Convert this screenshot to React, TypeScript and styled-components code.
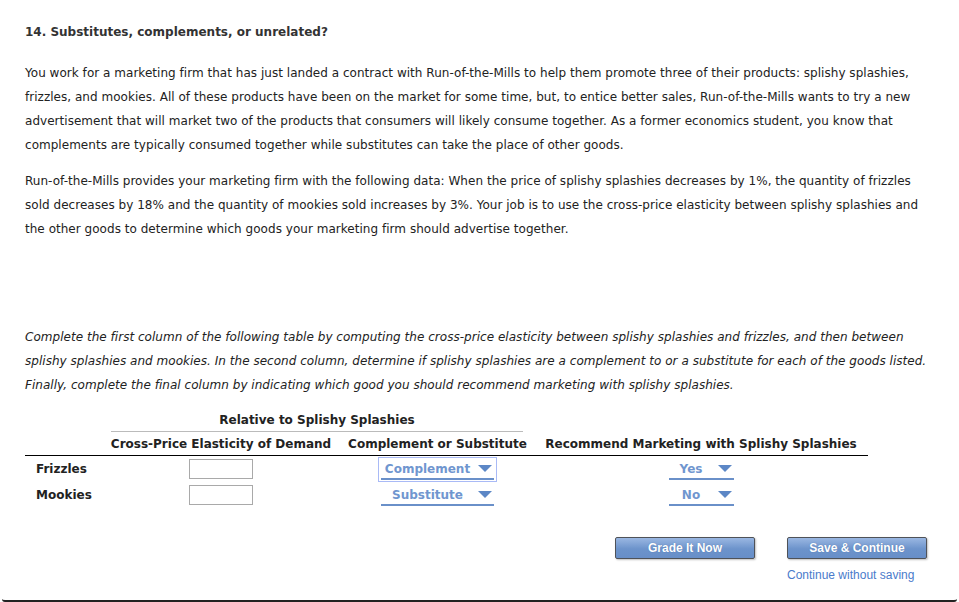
import React from 'react';
import styled, { createGlobalStyle } from 'styled-components';

const GlobalStyle = createGlobalStyle`
  body {
    margin: 0;
    background: #fff;
    font-family: "DejaVu Sans", Verdana, sans-serif;
  }
`

const Page = styled.div`
  box-sizing: border-box;
  width: 955px;
  height: 602px;
  margin: 0 2px;
  padding: 24px 30px 0 21px;
  border-bottom: 2px solid #222;
  border-radius: 0 0 3px 3px;
  color: #222;
  font-size: 12px;
`
const Title = styled.h2`
  margin: 0 0 21px 2px;
  font-size: 12px;
  line-height: 16px;
  font-weight: bold;
  color: #333;
`
const Para = styled.p<{ $italic?: boolean; $gap?: number }>`
  margin: 0 0 ${p => p.$gap ?? 12}px 2px;
  width: 912px;
  line-height: 24px;
  letter-spacing: 0.03px;
  font-style: ${p => (p.$italic ? 'italic' : 'normal')};
`
const Table = styled.table`
  margin: 15px 0 0 2px;
  width: 843px;
  border-collapse: collapse;
  table-layout: fixed;
`
const GroupCell = styled.th`
  padding: 0 11px 0 10px;
  font-weight: bold;
  font-size: 12px;
`
const GroupLabel = styled.div`
  line-height: 16px;
  padding-bottom: 3px;
  border-bottom: 1px solid #bbb;
`
const HeadCell = styled.th`
  padding: 4px 0 3px;
  line-height: 16px;
  font-size: 12px;
  font-weight: bold;
  text-align: center;
  border-bottom: 1px solid #000;
  white-space: nowrap;
`
const RowLabel = styled.td`
  height: 26px;
  padding: 0 0 0 11px;
  font-weight: bold;
  font-size: 12px;
  vertical-align: middle;
`
const Cell = styled.td`
  text-align: center;
  vertical-align: middle;
  padding: 0;
`
const TextBox = styled.input`
  box-sizing: border-box;
  width: 64px;
  height: 20px;
  border: 1px solid #a9a9a9;
  padding: 0 3px;
  font: inherit;
  vertical-align: middle;
`
const SelectWrap = styled.span<{ $focused?: boolean }>`
  display: inline-block;
  vertical-align: middle;
  padding: 2px 2px 1px;
  border: 1px solid ${p => (p.$focused ? '#a9baf6' : 'transparent')};
`
const Select = styled.span<{ $width: number }>`
  display: flex;
  align-items: center;
  width: ${p => p.$width}px;
  height: 18px;
  border-bottom: 2px solid #6a90c9;
  color: #7096cf;
  font-weight: bold;
  font-size: 12px;
  cursor: pointer;
`
const SelectText = styled.span`
  flex: 1;
  text-align: center;
`
const Arrow = styled.svg`
  width: 14px;
  height: 8px;
  margin: 0 2px 0 4px;
`
const Actions = styled.div`
  display: flex;
  justify-content: flex-end;
  gap: 32px;
  margin-top: 29px;
`
const ActionCol = styled.div`
  display: flex;
  flex-direction: column;
  align-items: flex-start;
`
const Button = styled.button`
  box-sizing: border-box;
  width: 140px;
  height: 22px;
  border: 1px solid #4f5258;
  border-radius: 2px;
  background: linear-gradient(#9ab7e2, #6c93cb 55%, #688fc8);
  color: #fff;
  font-family: "Liberation Sans", Arial, sans-serif;
  font-weight: bold;
  font-size: 12px;
  text-shadow: 0 0 1px #4a6ea6;
  box-shadow: 1px 1px 2px rgba(0, 0, 0, 0.25);
  cursor: pointer;
`
const Link = styled.a`
  margin-top: 9px;
  color: #4a7bcb;
  font-family: "Liberation Sans", Arial, sans-serif;
  font-size: 12px;
  line-height: 14px;
  text-decoration: none;
  cursor: pointer;
`

const Dropdown = ({ value, width, focused }: { value: string; width: number; focused?: boolean }) => (
  <SelectWrap $focused={focused}>
    <Select $width={width}>
      <SelectText>{value}</SelectText>
      <Arrow viewBox="0 0 14 8">
        <path d="M0 0 H14 L7 7 Z" fill="#5c87c6" />
      </Arrow>
    </Select>
  </SelectWrap>
)

const rows = [
  { name: 'Frizzles', kind: 'Complement', rec: 'Yes', focused: true },
  { name: 'Mookies', kind: 'Substitute', rec: 'No', focused: false },
]

export default function App() {
  return (
    <>
      <GlobalStyle />
      <Page>
        <Title>14. Substitutes, complements, or unrelated?</Title>
        <Para>
          You work for a marketing firm that has just landed a contract with Run-of-the-Mills to help them promote three of their products: splishy splashies, frizzles, and mookies. All of these products have been on the market for some time, but, to entice better sales, Run-of-the-Mills wants to try a new advertisement that will market two of the products that consumers will likely consume together. As a former economics student, you know that complements are typically consumed together while substitutes can take the place of other goods.
        </Para>
        <Para $gap={84}>
          Run-of-the-Mills provides your marketing firm with the following data: When the price of splishy splashies decreases by 1%, the quantity of frizzles sold decreases by 18% and the quantity of mookies sold increases by 3%. Your job is to use the cross-price elasticity between splishy splashies and the other goods to determine which goods your marketing firm should advertise together.
        </Para>
        <Para $italic $gap={0}>
          Complete the first column of the following table by computing the cross-price elasticity between splishy splashies and frizzles, and then between splishy splashies and mookies. In the second column, determine if splishy splashies are a complement to or a substitute for each of the goods listed. Finally, complete the final column by indicating which good you should recommend marketing with splishy splashies.
        </Para>
        <Table>
          <colgroup>
            <col style={{ width: 76 }} />
            <col style={{ width: 240 }} />
            <col style={{ width: 193 }} />
            <col style={{ width: 334 }} />
          </colgroup>
          <thead>
            <tr>
              <th />
              <GroupCell colSpan={2}>
                <GroupLabel>Relative to Splishy Splashies</GroupLabel>
              </GroupCell>
              <th />
            </tr>
            <tr>
              <HeadCell />
              <HeadCell>Cross-Price Elasticity of Demand</HeadCell>
              <HeadCell>Complement or Substitute</HeadCell>
              <HeadCell>Recommend Marketing with Splishy Splashies</HeadCell>
            </tr>
          </thead>
          <tbody>
            {rows.map(r => (
              <tr key={r.name}>
                <RowLabel>{r.name}</RowLabel>
                <Cell>
                  <TextBox type="text" />
                </Cell>
                <Cell>
                  <Dropdown value={r.kind} width={113} focused={r.focused} />
                </Cell>
                <Cell>
                  <Dropdown value={r.rec} width={65} />
                </Cell>
              </tr>
            ))}
          </tbody>
        </Table>
        <Actions>
          <ActionCol>
            <Button>Grade It Now</Button>
          </ActionCol>
          <ActionCol>
            <Button>Save &amp; Continue</Button>
            <Link>Continue without saving</Link>
          </ActionCol>
        </Actions>
      </Page>
    </>
  );
}
